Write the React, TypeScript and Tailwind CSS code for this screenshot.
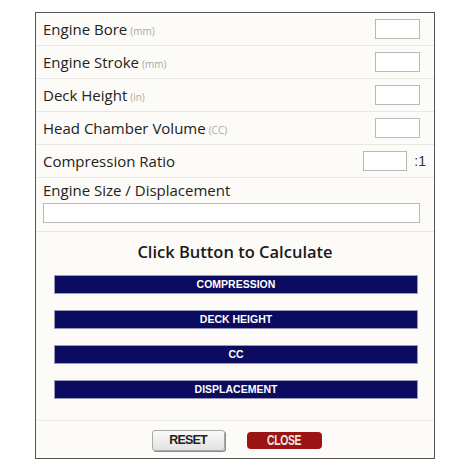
const fields = [
  { label: "Engine Bore", unit: "(mm)" },
  { label: "Engine Stroke", unit: "(mm)" },
  { label: "Deck Height", unit: "(in)" },
  { label: "Head Chamber Volume", unit: "(CC)" },
];

const calcButtons = ["COMPRESSION", "DECK HEIGHT", "CC", "DISPLACEMENT"];

const App = () => {
  return (
    <div className="w-[471px] h-[471px] bg-white pt-[12px] pl-[35px] font-['Open_Sans',sans-serif]">
      <div className="w-[400px] h-[447px] border border-[#555555] bg-[#fcfbf8] flex flex-col">
        {/* Input rows */}
        {fields.map((f) => (
          <div
            key={f.label}
            className="h-[33px] border-b border-[#e9e7e1] flex items-center justify-between pl-[7px] pr-[14px]"
          >
            <div className="flex items-baseline text-[15px] text-[#222]">
              <span>{f.label}</span>
              <span className="ml-[3px] text-[10px] text-[#a8a8a8]">{f.unit}</span>
            </div>
            <input className="w-[45px] h-[20px] bg-white border border-[#b8b8b8] outline-none" />
          </div>
        ))}

        <div className="h-[33px] border-b border-[#e9e7e1] flex items-center justify-between pl-[7px] pr-[8px]">
          <span className="text-[15px] text-[#222]">Compression Ratio</span>
          <div className="flex items-center">
            <input className="w-[44px] h-[20px] bg-white border border-[#b8b8b8] outline-none" />
            <span className="ml-[7px] text-[14px] text-[#333] font-['Liberation_Sans',sans-serif]">:1</span>
          </div>
        </div>

        {/* Displacement */}
        <div className="h-[54px] border-b border-[#e9e7e1] pl-[7px] pr-[14px] pt-[2px]">
          <div className="text-[15px] text-[#222] leading-[21px]">Engine Size / Displacement</div>
          <input className="mt-[2px] w-full h-[20px] bg-white border border-[#b8b8b8] outline-none" />
        </div>

        {/* Calculate */}
        <div className="flex-1 flex flex-col pt-[8px]">
          <div className="text-center text-[16.5px] font-semibold text-[#1a1a1a] leading-[24px]">
            Click Button to Calculate
          </div>
          <div className="mt-[11px] flex flex-col gap-[16px] pl-[18px]">
            {calcButtons.map((b) => (
              <button
                key={b}
                className="w-[364px] h-[19px] bg-[#0b0b60] border border-[#9a9ab8] text-white text-[10.5px] font-bold font-['Liberation_Sans',sans-serif] flex items-center justify-center"
              >
                {b}
              </button>
            ))}
          </div>
        </div>

        {/* Footer */}
        <div className="h-[38px] border-t border-[#ecebe6] flex items-start justify-center gap-[22px] pt-[9px] pl-[3px]">
          <button className="w-[73px] h-[21px] rounded-[3px] border border-[#a9a9a9] bg-gradient-to-b from-[#fafafa] to-[#e2e2e2] shadow-[1px_1px_0_#8c8c8c] text-[12.5px] font-bold tracking-[-0.8px] text-[#222] font-['Liberation_Sans',sans-serif] flex items-center justify-center">
            RESET
          </button>
          <button className="mt-[2px] w-[75px] h-[17px] rounded-[4px] bg-[#9b1414] text-[14px] font-bold text-[#f4e4e4] font-['Liberation_Sans',sans-serif] flex items-center justify-center">
            <span className="inline-block scale-x-[0.74] tracking-[-0.4px]">CLOSE</span>
          </button>
        </div>
      </div>
    </div>
  );
};

export default App;
